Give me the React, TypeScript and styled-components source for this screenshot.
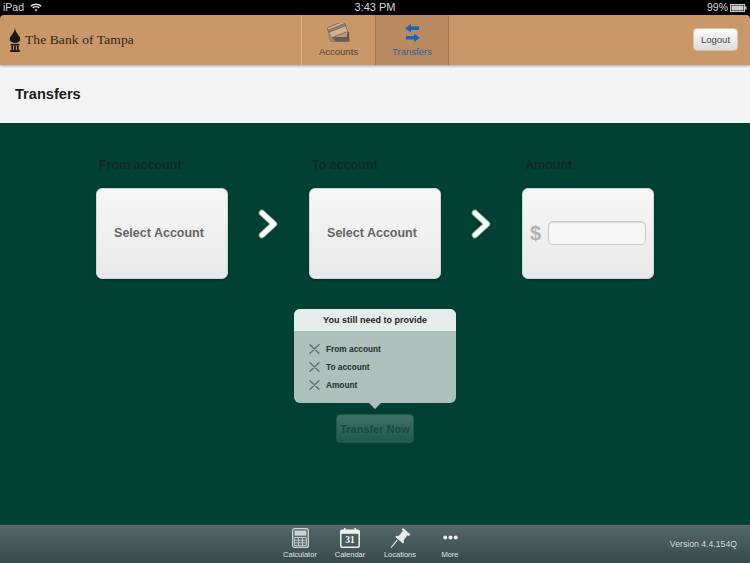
import { FC } from 'react';
import styled, { createGlobalStyle } from 'styled-components';

const GlobalStyle = createGlobalStyle`
  html, body { margin: 0; padding: 0; background: #000; }
  * { box-sizing: border-box; }
  #root { width: 750px; height: 563px; overflow: hidden; }
`;

const Page = styled.div`
  display: flex;
  flex-direction: column;
  width: 750px;
  height: 563px;
  font-family: 'Liberation Sans', Arial, sans-serif;
  background: #000;
`;

const StatusBar = styled.div`
  display: grid;
  grid-template-columns: 1fr auto 1fr;
  align-items: center;
  height: 15px;
  padding: 0 3px;
  color: #d8d8d8;
  font-size: 10.5px;
  line-height: 15px;
`;

const StatusLeft = styled.div`
  display: flex;
  align-items: center;
  gap: 6px;
`;

const StatusRight = styled.div`
  display: flex;
  align-items: center;
  justify-content: flex-end;
  gap: 2px;
`;

const Clock = styled.span`
  font-size: 11px;
`;

const Header = styled.header`
  position: relative;
  z-index: 2;
  display: flex;
  align-items: stretch;
  height: 50px;
  background: #c99768;
  border-radius: 4px 4px 0 0;
  box-shadow: 0 1px 3px rgba(0, 0, 0, 0.35);
`;

const Brand = styled.div`
  display: flex;
  align-items: center;
  gap: 4px;
  width: 301px;
  padding: 0 0 0 9px;
`;

const BrandName = styled.span`
  font-family: 'Liberation Serif', 'Times New Roman', serif;
  font-size: 13.5px;
  color: #33241a;
  letter-spacing: 0.1px;
`;

const NavTab = styled.div<{ $active?: boolean }>`
  display: flex;
  flex-direction: column;
  align-items: center;
  width: 74px;
  padding-top: 8px;
  gap: 4px;
  font-size: 9.5px;
  line-height: 12px;
  color: ${({ $active }) => ($active ? '#2a62a8' : '#4f4337')};
  background: ${({ $active }) => ($active ? '#b98a5f' : 'transparent')};
  border-left: 1px solid ${({ $active }) => ($active ? '#a27a55' : '#dcb792')};
  border-right: ${({ $active }) => ($active ? '1px solid #a27a55' : 'none')};
`;

const NavIcon = styled.div`
  display: flex;
  align-items: center;
  justify-content: center;
  height: 19px;
`;

const HeaderEnd = styled.div`
  flex: 1;
  display: flex;
  align-items: center;
  justify-content: flex-end;
  padding: 0 12px 2px 0;
`;

const LogoutButton = styled.button`
  width: 45px;
  height: 23px;
  padding: 0;
  border: 1px solid #d8c3ac;
  border-radius: 4px;
  background: linear-gradient(#fbfbfb, #dcdcdc);
  color: #444;
  font: 9.5px 'Liberation Sans', Arial, sans-serif;
`;

const TitleBar = styled.div`
  display: flex;
  align-items: center;
  height: 58px;
  padding: 0 0 0 15px;
  background: #f4f4f4;
`;

const Title = styled.h1`
  margin: 0;
  font-size: 14.6px;
  font-weight: 700;
  color: #1c1c1c;
`;

const Main = styled.main`
  flex: 1;
  display: flex;
  flex-direction: column;
  align-items: center;
  padding-top: 35px;
  background: #004133;
`;

const Steps = styled.div`
  display: grid;
  grid-template-columns: repeat(5, auto);
  grid-template-rows: auto 91px;
  row-gap: 15px;
`;

const StepLabel = styled.div`
  padding-left: 3px;
  font-size: 12.5px;
  font-weight: 700;
  line-height: 15px;
  color: #0f2a23;
`;

const Card = styled.div`
  display: flex;
  align-items: center;
  justify-content: center;
  width: 132px;
  padding: 0 6px 2px 0;
  border: 1px solid #cfd8d4;
  border-radius: 6px;
  background: linear-gradient(#f7f7f7, #e9e9e9);
  box-shadow: 0 1px 2px rgba(0, 0, 0, 0.35);
`;

const CardText = styled.span`
  font-size: 12.5px;
  font-weight: 700;
  color: #666;
`;

const AmountCard = styled(Card)`
  justify-content: flex-start;
  gap: 7px;
  padding: 0 7px;
`;

const Dollar = styled.span`
  font-size: 20px;
  font-weight: 700;
  color: #b3b3b3;
`;

const AmountInput = styled.div`
  width: 98px;
  height: 24px;
  margin-top: -1px;
  border: 1px solid #c9c9c9;
  border-radius: 5px;
  background: #f7f7f7;
  box-shadow: inset 0 1px 1px rgba(0, 0, 0, 0.12);
`;

const ArrowCell = styled.div`
  display: flex;
  align-items: flex-start;
  justify-content: center;
  width: 81px;
  padding: 21px 2px 0 0;
`;

const Popover = styled.div`
  position: relative;
  width: 162px;
  height: 94px;
  margin-top: 30px;
  border-radius: 6px;
  background: #adc0bb;

  &::after {
    content: '';
    position: absolute;
    left: 75px;
    bottom: -6px;
    border-left: 6px solid transparent;
    border-right: 6px solid transparent;
    border-top: 6px solid #adc0bb;
  }
`;

const PopoverHead = styled.div`
  height: 22px;
  border-radius: 6px 6px 0 0;
  background: #e6ecea;
  color: #1d1d1d;
  font-size: 9px;
  font-weight: 700;
  line-height: 22px;
  text-align: center;
`;

const MissingList = styled.ul`
  display: flex;
  flex-direction: column;
  gap: 4px;
  margin: 0;
  padding: 11px 0 0 15px;
  list-style: none;
`;

const MissingItem = styled.li`
  display: flex;
  align-items: center;
  gap: 6px;
  height: 14px;
  font-size: 8.3px;
  font-weight: 700;
  color: #22302c;
`;

const TransferButton = styled.button`
  width: 78px;
  height: 29px;
  margin-top: 11px;
  padding: 0;
  border: 1px solid #1f5748;
  border-radius: 4px;
  background: linear-gradient(#3f7164, #1d5a4b);
  color: #1a4b3f;
  font: 700 11px 'Liberation Sans', Arial, sans-serif;
`;

const Footer = styled.footer`
  position: relative;
  display: flex;
  justify-content: center;
  align-items: flex-start;
  height: 39px;
  padding: 2px 0 0 0;
  background: linear-gradient(#53686a, #38494b);
  border-top: 1px solid #2b3a3b;
`;

const FooterTabs = styled.nav`
  display: flex;
`;

const FooterTab = styled.div`
  display: flex;
  flex-direction: column;
  align-items: center;
  width: 50px;
  gap: 2px;
  color: #dfe5e5;
  font-size: 7.5px;
`;

const IconSlot = styled.div`
  display: flex;
  align-items: center;
  justify-content: center;
  height: 21px;
`;

const Version = styled.span`
  position: absolute;
  right: 13px;
  top: 14px;
  color: #d6dcdc;
  font-size: 8.7px;
`;

const WifiIcon: FC = () => (
  <svg width="12" height="9" viewBox="0 0 12 9" fill="none" stroke="#e0e0e0" strokeWidth="1.4">
    <path d="M0.8 3.2C3.7 .6 8.3 .6 11.2 3.2" />
    <path d="M2.6 5C4.5 3.4 7.5 3.4 9.4 5" />
    <path d="M6 8.6L4.4 6.6C5.3 6 6.7 6 7.6 6.6Z" fill="#e0e0e0" stroke="none" />
  </svg>
);

const BatteryIcon: FC = () => (
  <svg width="17" height="8" viewBox="0 0 17 8">
    <rect x="0.5" y="0.5" width="14" height="7" fill="none" stroke="#ccc" />
    <rect x="1.5" y="1.5" width="12" height="5" fill="#ccc" />
    <rect x="15" y="2.5" width="1.5" height="3" fill="#ccc" />
  </svg>
);

const LogoMark: FC = () => (
  <svg width="12" height="24" viewBox="0 0 12 25" fill="#1d1512">
    <path d="M6 0C6.4 3 7.5 5 9.4 7.2C11 9 11.8 10.6 11.4 12.4C11 14.2 8.8 15.4 6 15.6C3.2 15.4 1 14.2 .6 12.4C.2 10.6 1 9 2.6 7.2C4.5 5 5.6 3 6 0Z" />
    <rect x="1.5" y="16.6" width="9" height="1.6" />
    <rect x="2.2" y="18.2" width="1.8" height="4.8" />
    <rect x="5.1" y="18.2" width="1.8" height="4.8" />
    <rect x="8" y="18.2" width="1.8" height="4.8" />
    <rect x="1" y="23" width="10" height="2" />
  </svg>
);

const AccountsIcon: FC = () => (
  <svg width="23" height="19" viewBox="0 0 23 19">
    <g transform="rotate(-22 11 8)" stroke="#75695c" strokeWidth="0.8" fill="#cfb08f">
      <rect x="2" y="1" width="18" height="11" rx="1.2" />
      <rect x="2" y="3.6" width="18" height="2.2" fill="#8d8172" />
    </g>
    <path d="M2.6 14L4 18.8H22.6L22 8.6L20.4 9.2L19.6 14Z" fill="#665c50" />
    <path d="M1 12L3 18.8H9L2.4 11Z" fill="#94877a" />
  </svg>
);

const TransfersIcon: FC = () => (
  <svg width="15" height="18" viewBox="0 0 15 18" fill="#1c62bb">
    <path d="M0 4.2L6 0V2.4H14V6H6V8.4Z" />
    <path d="M15 13.8L9 9.6V12H1V15.6H9V18Z" />
  </svg>
);

const ChevronIcon: FC = () => (
  <svg width="22" height="30" viewBox="0 0 22 30" fill="none">
    <path d="M5 4L17 15L5 26" stroke="#9fb8b0" strokeWidth="6.4" strokeLinecap="round" strokeLinejoin="round" />
    <path d="M5 4L17 15L5 26" stroke="#fff" strokeWidth="4.6" strokeLinecap="round" strokeLinejoin="round" />
  </svg>
);

const CrossIcon: FC = () => (
  <svg width="11" height="10" viewBox="0 0 11 10" stroke="#6a6f6e" strokeWidth="1.5" strokeLinecap="round">
    <path d="M1 .8L10 9.2M10 .8L1 9.2" />
  </svg>
);

const CalculatorIcon: FC = () => (
  <svg width="17" height="20" viewBox="0 0 17 20">
    <rect x="0.6" y="0.6" width="15.8" height="18.8" rx="2" fill="#5d6f70" stroke="#cdd4d4" strokeWidth="1.2" />
    <rect x="2.6" y="2.6" width="11.8" height="5" fill="#cdd4d4" />
    <path d="M2.5 9.5H14.5V17.5H2.5ZM2.5 12.2H14.5M2.5 14.8H14.5M6.5 9.5V17.5M10.5 9.5V17.5" fill="none" stroke="#cdd4d4" strokeWidth="0.8" />
  </svg>
);

const CalendarIcon: FC = () => (
  <svg width="20" height="20" viewBox="0 0 20 20">
    <rect x="0.8" y="2.2" width="18.4" height="17" rx="1.5" fill="none" stroke="#eef1f1" strokeWidth="1.5" />
    <rect x="0.8" y="2.2" width="18.4" height="3.6" fill="#eef1f1" />
    <rect x="4" y="0" width="1.6" height="3.5" fill="#eef1f1" />
    <rect x="14.4" y="0" width="1.6" height="3.5" fill="#eef1f1" />
    <text x="10" y="15.4" textAnchor="middle" fill="#f4f6f6" fontSize="9.5" fontWeight="700" fontFamily="'Liberation Serif', serif">31</text>
  </svg>
);

const PinIcon: FC = () => (
  <svg width="21" height="20" viewBox="0 0 21 20" fill="#e8ecec">
    <path d="M13 0L20.5 6.6L18.8 8L17.4 7.2L13.6 12.6C14.2 14 14 15 13 15.6L5.4 9C6 8 7.2 7.6 8.6 8L12.8 3L11.8 1.6Z" />
    <path d="M7.4 12L1 19.6" stroke="#e8ecec" strokeWidth="1.1" />
  </svg>
);

const MoreIcon: FC = () => (
  <svg width="15" height="5" viewBox="0 0 15 5" fill="#f2f4f4">
    <circle cx="2.2" cy="2.5" r="2" />
    <circle cx="7.5" cy="2.5" r="2" />
    <circle cx="12.8" cy="2.5" r="2" />
  </svg>
);

const missing = ['From account', 'To account', 'Amount'];

const footerTabs = [
  { label: 'Calculator', icon: <CalculatorIcon /> },
  { label: 'Calendar', icon: <CalendarIcon /> },
  { label: 'Locations', icon: <PinIcon /> },
  { label: 'More', icon: <MoreIcon /> },
];

const App: FC = () => (
  <Page>
    <GlobalStyle />
    <StatusBar>
      <StatusLeft>
        iPad <WifiIcon />
      </StatusLeft>
      <Clock>3:43 PM</Clock>
      <StatusRight>
        99% <BatteryIcon />
      </StatusRight>
    </StatusBar>

    <Header>
      <Brand>
        <LogoMark />
        <BrandName>The Bank of Tampa</BrandName>
      </Brand>
      <NavTab>
        <NavIcon>
          <AccountsIcon />
        </NavIcon>
        Accounts
      </NavTab>
      <NavTab $active>
        <NavIcon>
          <TransfersIcon />
        </NavIcon>
        Transfers
      </NavTab>
      <HeaderEnd>
        <LogoutButton>Logout</LogoutButton>
      </HeaderEnd>
    </Header>

    <TitleBar>
      <Title>Transfers</Title>
    </TitleBar>

    <Main>
      <Steps>
        <StepLabel>From account</StepLabel>
        <span />
        <StepLabel>To account</StepLabel>
        <span />
        <StepLabel>Amount</StepLabel>
        <Card>
          <CardText>Select Account</CardText>
        </Card>
        <ArrowCell>
          <ChevronIcon />
        </ArrowCell>
        <Card>
          <CardText>Select Account</CardText>
        </Card>
        <ArrowCell>
          <ChevronIcon />
        </ArrowCell>
        <AmountCard>
          <Dollar>$</Dollar>
          <AmountInput />
        </AmountCard>
      </Steps>

      <Popover>
        <PopoverHead>You still need to provide</PopoverHead>
        <MissingList>
          {missing.map((item) => (
            <MissingItem key={item}>
              <CrossIcon />
              {item}
            </MissingItem>
          ))}
        </MissingList>
      </Popover>
      <TransferButton>Transfer Now</TransferButton>
    </Main>

    <Footer>
      <FooterTabs>
        {footerTabs.map(({ label, icon }) => (
          <FooterTab key={label}>
            <IconSlot>{icon}</IconSlot>
            {label}
          </FooterTab>
        ))}
      </FooterTabs>
      <Version>Version 4.4.154Q</Version>
    </Footer>
  </Page>
);

export default App;
